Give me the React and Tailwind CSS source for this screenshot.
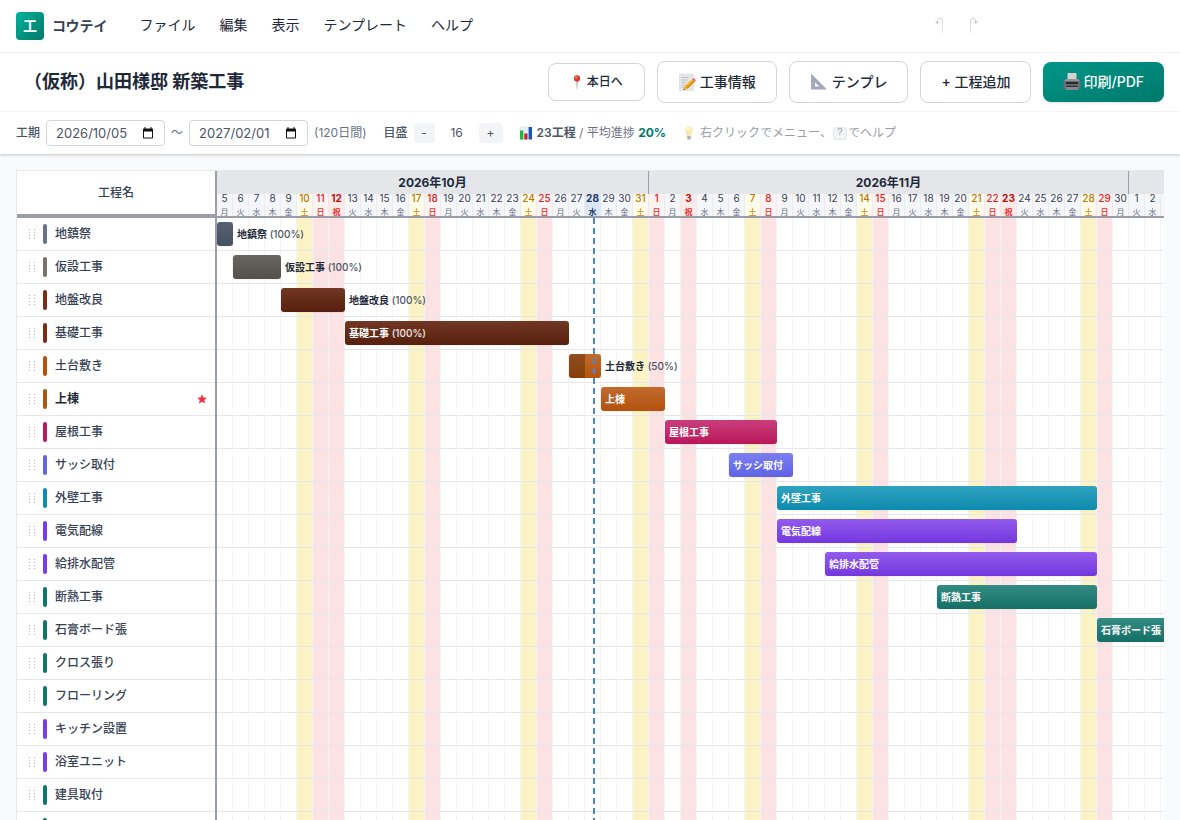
const FONT = "font-['Inter','Noto_Sans_CJK_JP',sans-serif]";

const WEEKDAYS = ["日", "月", "火", "水", "木", "金", "土"];
const HOLIDAYS = ["10/12", "11/3", "11/23"];
const TODAY = "10/28";

const MONTHS = [
  { label: "2026年10月", month: 10, from: 5, to: 31, span: "w-[432px]" },
  { label: "2026年11月", month: 11, from: 1, to: 30, span: "w-[480px]" },
  { label: "2026年12月", month: 12, from: 1, to: 31, span: "w-[496px]" },
];

const DAYS = MONTHS.flatMap(({ month, from, to }) =>
  Array.from({ length: to - from + 1 }, (_, i) => {
    const day = from + i;
    const key = `${month}/${day}`;
    const wd = new Date(2026, month - 1, day).getDay();
    const holiday = HOLIDAYS.includes(key);
    let kind = "weekday";
    if (wd === 6) kind = "saturday";
    if (wd === 0) kind = "sunday";
    if (holiday) kind = "holiday";
    if (key === TODAY) kind = "today";
    return { key, day, kind, wd: holiday ? "祝" : WEEKDAYS[wd] };
  })
);

const HEAD_STYLE = {
  weekday: "bg-[#f5f6f9] text-gray-700",
  saturday: "bg-[#fefce8] font-medium text-[#b9770e]",
  sunday: "bg-[#fef2f2] font-medium text-[#dc2626]",
  holiday: "bg-[#fee9e9] font-bold text-[#b80f0f]",
  today: "bg-[#dbe7f8] font-bold text-[#1e3a5f]",
};
const WD_STYLE = {
  weekday: "text-gray-500",
  saturday: "text-[#d08a10]",
  sunday: "text-[#ef2b2b]",
  holiday: "text-[#ef2b2b]",
  today: "text-[#1e3a5f]",
};
const COLUMN_STYLE = {
  weekday: "",
  today: "",
  saturday: "bg-[#fcf3c5]",
  sunday: "bg-[#fde2e3]",
  holiday: "bg-[#fde2e3]",
};

const DAY = 16;
const TASKS = [
  { name: "地鎮祭", mark: "bg-[#64748b]", bar: "from-[#566273] to-[#465262]", start: 0, days: 1, pct: 100, outside: true },
  { name: "仮設工事", mark: "bg-[#78716c]", bar: "from-[#68665f] to-[#54514b]", start: 1, days: 3, pct: 100, outside: true },
  { name: "地盤改良", mark: "bg-[#7c2d12]", bar: "from-[#723725] to-[#571f0d]", start: 4, days: 4, pct: 100, outside: true },
  { name: "基礎工事", mark: "bg-[#7c2d12]", bar: "from-[#723725] to-[#571f0d]", start: 8, days: 14, pct: 100 },
  { name: "土台敷き", mark: "bg-[#b45309]", bar: "from-[#c06a2b] to-[#b45309]", start: 22, days: 2, pct: 50, outside: true, partial: true },
  { name: "上棟", mark: "bg-[#a8590f]", bar: "from-[#c26b2c] to-[#b2520c]", start: 24, days: 4, milestone: true },
  { name: "屋根工事", mark: "bg-[#b51d5c]", bar: "from-[#cb3c7b] to-[#b9155a]", start: 28, days: 7 },
  { name: "サッシ取付", mark: "bg-[#6366e1]", bar: "from-[#7c7ff0] to-[#6062e4]", start: 32, days: 4 },
  { name: "外壁工事", mark: "bg-[#0c8fb3]", bar: "from-[#2ea2c0] to-[#0a8bb0]", start: 35, days: 20 },
  { name: "電気配線", mark: "bg-[#7c3aed]", bar: "from-[#935bef] to-[#7436de]", start: 35, days: 15 },
  { name: "給排水配管", mark: "bg-[#7c3aed]", bar: "from-[#935bef] to-[#7436de]", start: 38, days: 17 },
  { name: "断熱工事", mark: "bg-[#0f766e]", bar: "from-[#338c84] to-[#146f66]", start: 45, days: 10 },
  { name: "石膏ボード張", mark: "bg-[#0f766e]", bar: "from-[#338c84] to-[#146f66]", start: 55, days: 10 },
  { name: "クロス張り", mark: "bg-[#0f766e]" },
  { name: "フローリング", mark: "bg-[#0f766e]" },
  { name: "キッチン設置", mark: "bg-[#7c3aed]" },
  { name: "浴室ユニット", mark: "bg-[#7c3aed]" },
  { name: "建具取付", mark: "bg-[#0f766e]" },
  { name: "", mark: "bg-[#0f766e]" },
];

function Pin() {
  return (
    <svg viewBox="0 0 16 16" className="size-3.5" aria-hidden="true">
      <path d="M7.4 7h1.2l-.3 8.6h-.6z" fill="#8d9299" />
      <circle cx="8" cy="4" r="3.6" fill="#dc3a31" />
      <circle cx="6.9" cy="2.9" r="1.1" fill="#f59a90" />
    </svg>
  );
}

function Memo() {
  return (
    <svg viewBox="0 0 18 18" className="size-[18px]" aria-hidden="true">
      <rect x="1.500" y="1" width="14" height="16.500" rx=".6" fill="#e6e7e9" stroke="#cfd2d6" strokeWidth=".5" />
      <path d="M3.500 4.500h7M3.500 7h6M3.500 9.500h4M3.500 12h3M3.500 14.500h2" stroke="#b4b8be" strokeWidth=".8" />
      <path d="M14 6.200 16.800 8.700 9.500 15.800 5.500 17l.9-3.800z" fill="#f2b624" />
      <path d="M15.600 7.600 16.800 8.700 9.500 15.800l-1.500-1z" fill="#d88b13" />
      <path d="m14 6.200.9-.9c1-.7 3.200 1.200 2.700 2.500l-.8.9z" fill="#e46a65" />
      <path d="m5.500 17 .4-1.600 1.200 1.100z" fill="#3f3f46" />
    </svg>
  );
}

function SetSquare() {
  return (
    <svg viewBox="0 0 18 18" className="size-[18px]" aria-hidden="true">
      <path fillRule="evenodd" d="M1.500 1v15.500H17zM5 9.200l4.300 4.300H5z" fill="#a3a9bd" />
      <path d="M1.500 1v15.500" stroke="#8b92a8" strokeWidth=".6" />
      <path d="m4 5.500-.8.8M6.500 8l-.8.8M9 10.500l-.8.8M11.500 13l-.8.8" stroke="#747c94" strokeWidth=".5" />
    </svg>
  );
}

function Printer() {
  return (
    <svg viewBox="0 0 18 18" className="size-[18px]" aria-hidden="true">
      <path d="M4.500 0h9v7h-9z" fill="#d5d3cf" />
      <path d="M2.500 6h13l2 3v5.500q0 1-1 1h-15q-1 0-1-1V9z" fill="#6b6f76" />
      <path d="M2.500 6h13l1.300 2H1.200z" fill="#90949b" />
      <path d="M3 9h12v2H3z" fill="#24272c" />
      <path d="M3.500 12.500h11L15.500 17h-13z" fill="#85898f" />
      <path d="M3.500 12.500h11l.4 1.500H3.100z" fill="#2d3035" />
    </svg>
  );
}

function Chart() {
  return (
    <svg viewBox="0 0 14 14" className="size-3.5" aria-hidden="true">
      <path d="M.5.500h13v13H.500z" fill="#e3edf5" />
      <path d="M1 4.500h3.300V13.500H1z" fill="#25b43a" />
      <path d="M5.300 7.500h3.200v6H5.300z" fill="#c4202d" />
      <path d="M9.600 1h3.400v12.500H9.600z" fill="#1c56b5" />
    </svg>
  );
}

function Bulb() {
  return (
    <svg viewBox="0 0 14 14" className="size-3.5 opacity-70" aria-hidden="true">
      <path d="M7 .3a4.200 4.200 0 0 0-4.200 4.200c0 2.400 1.900 3.300 2.200 5.500h4c.3-2.200 2.200-3.100 2.200-5.500A4.200 4.200 0 0 0 7 .3z" fill="#fbe9a0" />
      <path d="M6 9.800 5.600 5l1.400 1 1.400-1L8 9.800" fill="none" stroke="#e6c35c" strokeWidth=".5" />
      <circle cx="5.700" cy="3" r="1.300" fill="#fff8d8" />
      <path d="M5.200 10h3.600v2.600q0 1.200-1.800 1.200t-1.800-1.200z" fill="#8f949c" />
    </svg>
  );
}

function Calendar() {
  return (
    <svg viewBox="0 0 12 12" className="size-3" aria-hidden="true">
      <path fillRule="evenodd" d="M2.500 0h1v1.500h5V0h1v1.500h.5q1 0 1 1V10.500q0 1-1 1H2q-1 0-1-1v-8q0-1 1-1h.5zM2 4.500v6h8v-6z" fill="#111" />
    </svg>
  );
}

function UndoArrow({ flip }) {
  return (
    <svg viewBox="0 0 9 18" className={flip ? "h-[18px] w-[9px] -scale-x-100" : "h-[18px] w-[9px]"} aria-hidden="true">
      <defs>
        <linearGradient id="stem" gradientUnits="userSpaceOnUse" x1="0" y1="0" x2="0" y2="17">
          <stop offset="0" stopColor="#c5c8cd" />
          <stop offset="1" stopColor="#eceDef" />
        </linearGradient>
      </defs>
      <path d="M2.200 5C2.200 2.400 3.500 1 5 1s2.500 1.300 2.500 3.800V16.500" fill="none" stroke="url(#stem)" strokeWidth=".9" />
      <path d="M0 4.600h4.200L2.200 7z" fill="#c0c3c8" />
    </svg>
  );
}

function DateField({ id, label, value }) {
  return (
    <div className="flex h-[26px] w-[119px] items-center rounded-[4px] border border-gray-300 bg-white pr-2.5 pl-[9px]">
      <input id={id} type="text" aria-label={label} defaultValue={value} className="w-full min-w-0 text-[13px] leading-5 text-gray-600 outline-none" />
      <button type="button" aria-label={`${label}を選択`}><Calendar /></button>
    </div>
  );
}

function Grip() {
  return (
    <svg viewBox="0 0 8 12" className="h-3 w-2" fill="#a9adb5" aria-hidden="true">
      {[1.500, 4.500, 7.500, 10.500].map((y) => (
        <g key={y}>
          <circle cx="1.500" cy={y} r=".6" />
          <circle cx="6.500" cy={y} r=".6" />
        </g>
      ))}
    </svg>
  );
}

function TaskBar({ task }) {
  const label = (
    <span className="relative whitespace-nowrap">
      <span className="font-semibold">{task.name}</span>
      {task.pct ? <span className={task.outside ? "font-medium text-gray-600" : "font-medium text-white/90"}> ({task.pct}%)</span> : null}
    </span>
  );
  return (
    <div className="absolute top-1 flex h-6 items-center text-[10px]" style={{ left: task.start * DAY }}>
      <div
        className={`relative flex h-6 items-center overflow-hidden rounded-[3px] bg-linear-to-b px-1 text-white shadow-xs ${task.bar}`}
        style={{ width: task.days * DAY }}
      >
        {task.partial && <div className="absolute inset-y-0 left-0 w-1/2 bg-black/25" />}
        {!task.outside && label}
      </div>
      {task.outside && <div className="ml-1 text-gray-800">{label}</div>}
    </div>
  );
}

const outlineButton = "flex items-center rounded-lg border border-gray-300 bg-white font-medium text-gray-800";

export default function App() {
  return (
    <div className={`flex h-screen flex-col overflow-hidden bg-[#f9fafc] text-gray-800 ${FONT}`}>
      <div className="relative shrink-0 bg-white shadow-[0_1px_3px_rgba(0,0,0,0.22)]">
        <header className="flex h-[53px] items-center border-b border-gray-100 px-4">
          <div className="flex size-7 items-center justify-center rounded-[4px] bg-linear-to-br from-[#00b398] to-[#00796b] text-sm font-bold text-white">工</div>
          <span className="ml-2 text-sm font-bold text-gray-700">コウテイ</span>
          <nav className="ml-5 flex text-sm text-gray-800">
            {["ファイル", "編集", "表示", "テンプレート", "ヘルプ"].map((item) => (
              <button key={item} type="button" className="px-3 pt-0.5 pb-1">{item}</button>
            ))}
          </nav>
          <div className="mr-[186px] ml-auto flex gap-[25px]">
            <button type="button" aria-label="元に戻す" disabled><UndoArrow /></button>
            <button type="button" aria-label="やり直し" disabled><UndoArrow flip /></button>
          </div>
        </header>

        <div className="flex h-[59px] items-center justify-between border-b border-gray-100 px-4">
          <h1 className="pl-2 text-lg font-bold text-gray-800">（仮称）山田様邸 新築工事</h1>
          <div className="flex items-center gap-3">
            <button type="button" className={`${outlineButton} h-[38px] gap-[3px] px-[21px] text-xs`}><Pin />本日へ</button>
            <button type="button" className={`${outlineButton} h-[42px] gap-1 px-5 text-sm`}><Memo />工事情報</button>
            <button type="button" className={`${outlineButton} h-[42px] gap-1 px-5 text-sm`}><SetSquare />テンプレ</button>
            <button type="button" className={`${outlineButton} h-[42px] px-5 text-sm`}>+ 工程追加</button>
            <button type="button" className="flex h-10 items-center gap-0.5 rounded-lg bg-linear-to-br from-[#009688] to-[#00796b] px-5 text-sm font-medium text-white shadow-sm"><Printer />印刷/PDF</button>
          </div>
        </div>

        <div className="flex h-[42px] items-center px-4 text-xs">
          <label htmlFor="start" className="mr-1.5 font-medium text-gray-600">工期</label>
          <DateField id="start" label="開始日" value="2026/10/05" />
          <span className="mx-1.5 text-gray-500">～</span>
          <DateField id="end" label="終了日" value="2027/02/01" />
          <span className="ml-1.5 text-gray-500">(120日間)</span>
          <span className="ml-[17px] font-medium text-gray-600">目盛</span>
          <button type="button" aria-label="縮小" className="ml-1.5 h-5 w-[21px] rounded-[4px] bg-gray-100 text-gray-600">-</button>
          <span className="w-11 text-center text-gray-600">16</span>
          <button type="button" aria-label="拡大" className="h-5 w-6 rounded-[4px] bg-gray-100 text-gray-600">+</button>
          <div className="ml-4 flex items-center gap-1 text-gray-500">
            <Chart />
            <span><b className="font-semibold text-gray-600">23工程</b> / 平均進捗 <b className="font-bold text-[#00796b]">20%</b></span>
          </div>
          <div className="ml-4 flex items-center gap-1 text-[#9a9da3]">
            <Bulb />
            <span className="flex items-center">右クリックでメニュー、<kbd className="mx-px flex h-[13px] w-3.5 items-center justify-center rounded-[3px] border border-gray-200 bg-gray-100 text-[10px]">?</kbd>でヘルプ</span>
          </div>
        </div>
      </div>

      <main className="flex min-h-0 flex-1 flex-col px-4 pt-4">
        <div className="flex min-h-0 flex-1 overflow-hidden border-t border-l border-gray-200 bg-white">
          <section className="w-[200px] shrink-0 border-r-2 border-[#9a9ea8]">
            <div className="flex h-[47px] items-center justify-center border-b-4 border-[#9a9ea8] text-xs font-medium text-gray-700">工程名</div>
            <ul>
              {TASKS.map((task) => (
                <li key={task.name} className="flex h-[33px] items-center border-b border-gray-200 pr-2 pl-[11px] text-xs">
                  <Grip />
                  <span className={`ml-[7px] h-5 w-1 rounded-full ${task.mark}`} />
                  <span className={task.milestone ? "ml-2 font-bold text-gray-800" : "ml-2 font-medium text-gray-700"}>{task.name}</span>
                  {task.milestone && (
                    <svg viewBox="0 0 10 10" className="ml-auto size-2.5" aria-label="重要">
                      <path d="m5 .3 1.400 3.100 3.400.4L7.300 6l.7 3.400L5 7.700 2 9.400 2.700 6 .2 3.800l3.400-.4z" fill="#ef3340" />
                    </svg>
                  )}
                </li>
              ))}
            </ul>
          </section>

          <section className="min-w-0 flex-1 overflow-hidden">
            <div className="h-[47px] border-b-2 border-[#9a9ea8]">
              <div className="flex h-[23px] bg-[#e5e6ea] text-xs font-bold">
                {MONTHS.map((m) => (
                  <div key={m.month} className={`flex shrink-0 items-center justify-center border-r border-[#9a9ea8] ${m.span}`}>{m.label}</div>
                ))}
              </div>
              <div className="flex h-[22px]">
                {DAYS.map((d) => (
                  <div key={d.key} className={`flex w-4 shrink-0 flex-col items-center border-r border-gray-200/70 ${HEAD_STYLE[d.kind]}`}>
                    <span className="text-[10px] leading-[8px]">{d.day}</span>
                    <span className={`mt-1.5 text-[8px] leading-[8px] ${WD_STYLE[d.kind]}`}>{d.wd}</span>
                  </div>
                ))}
              </div>
            </div>
            <div className="relative">
              <div className="absolute inset-0 flex">
                {DAYS.map((d) => (
                  <div key={d.key} className={`w-4 shrink-0 border-r border-gray-100 ${COLUMN_STYLE[d.kind]}`} />
                ))}
              </div>
              {TASKS.map((task) => (
                <div key={task.name} className="relative h-[33px] border-b border-gray-200">
                  {task.days && <TaskBar task={task} />}
                </div>
              ))}
              <div className="absolute inset-y-0 left-[376px] w-0.5 bg-[repeating-linear-gradient(to_bottom,#4a86cf_0_6px,transparent_6px_10px)]" />
            </div>
          </section>
        </div>
      </main>
    </div>
  );
}
